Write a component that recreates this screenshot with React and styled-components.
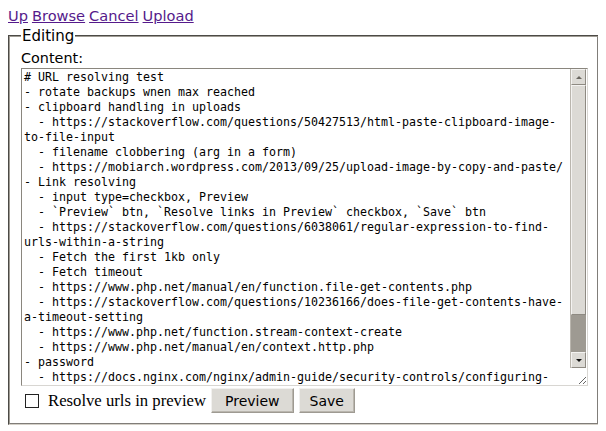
import React from 'react'
import styled, { createGlobalStyle } from 'styled-components'

const Global = createGlobalStyle`
  body {
    margin: 8px;
    font-family: "DejaVu Sans", sans-serif;
    font-size: 14px;
    background: #fff;
    color: #000;
  }
`

const Nav = styled.nav`
  line-height: 16px;
  font-size: 14.6px;
  margin-bottom: 4px;

  a {
    color: #551a8b;
    text-decoration: underline;
    margin-right: 4px;
  }
`

const Fieldset = styled.fieldset`
  margin: 0;
  padding: 0 9px 10px 11px;
  border: 2px groove #d4d0c8;
  border-top-color: #a09c94;
  border-left-color: #a09c94;
`

const Legend = styled.legend`
  padding: 0 1px;
  line-height: 16px;
  font-size: 15px;
`

const Label = styled.div`
  line-height: 16px;
  font-size: 14.4px;
  margin: 6px 0 2px;
`

const Editor = styled.div`
  position: relative;
  width: 567px;
`

const Area = styled.textarea`
  display: block;
  box-sizing: border-box;
  width: 567px;
  height: 318px;
  margin: 0;
  padding: 1px 21px 1px 2px;
  border: 1px solid #8a867e;
  border-right-color: #d8d6d2;
  border-bottom-color: #d8d6d2;
  font-family: "DejaVu Sans Mono", monospace;
  font-size: 11.63px;
  line-height: 15px;
  color: #000;
  background: #fff;
  resize: both;
  outline: none;
  overflow-y: scroll;
`

const ScrollBar = styled.div`
  position: absolute;
  top: 1px;
  right: 2px;
  width: 16px;
  height: 299px;
  display: flex;
  flex-direction: column;
  background: #9e9a92;
  border-left: 1px solid #bab6ae;
  box-sizing: border-box;
`

const Raised = styled.div`
  box-sizing: border-box;
  background: #dcdad5;
  border: 1px solid #8e8a82;
  border-top-color: #f4f3f1;
  border-left-color: #f4f3f1;
  flex: 0 0 ${p => p.$size}px;
  display: flex;
  align-items: center;
  justify-content: center;
`

const Arrow = styled.span`
  width: 0;
  height: 0;
  border-left: 3px solid transparent;
  border-right: 3px solid transparent;
  ${p => (p.$down ? 'border-top: 3px solid #111;' : 'border-bottom: 3px solid #6a6760;')}
`

const Trough = styled.div`
  flex: 1;
`

const Actions = styled.div`
  display: flex;
  align-items: center;
  margin-top: 2px;
`

const Check = styled.input`
  appearance: none;
  width: 14px;
  height: 14px;
  margin: 0 9px 0 4px;
  border: 1px solid #222;
  background: #fff;
  box-sizing: border-box;
`

const CheckText = styled.label`
  font-family: "Liberation Serif", serif;
  font-size: 16.7px;
  margin-right: 5px;
`

const Button = styled.button`
  font-family: "DejaVu Sans", sans-serif;
  font-size: 14px;
  height: 25px;
  padding: 0 ${p => p.$pad || 13}px;
  margin-right: 5px;
  color: #000;
  background: #dcdad5;
  border: 1px solid #9e9a92;
  border-top-color: #f2f1ef;
  border-left-color: #f2f1ef;
  box-shadow: inset -1px -1px 0 #bab6ae;
`

const content = `# URL resolving test
- rotate backups wnen max reached
- clipboard handling in uploads
  - https://stackoverflow.com/questions/50427513/html-paste-clipboard-image-to-file-input
  - filename clobbering (arg in a form)
  - https://mobiarch.wordpress.com/2013/09/25/upload-image-by-copy-and-paste/
- Link resolving
  - input type=checkbox, Preview
  - \`Preview\` btn, \`Resolve links in Preview\` checkbox, \`Save\` btn
  - https://stackoverflow.com/questions/6038061/regular-expression-to-find-urls-within-a-string
  - Fetch the first 1kb only
  - Fetch timeout
  - https://www.php.net/manual/en/function.file-get-contents.php
  - https://stackoverflow.com/questions/10236166/does-file-get-contents-have-a-timeout-setting
  - https://www.php.net/function.stream-context-create
  - https://www.php.net/manual/en/context.http.php
- password
  - https://docs.nginx.com/nginx/admin-guide/security-controls/configuring-http-basic-authentication/
`

const App = () => (
  <>
    <Global />
    <Nav>
      <a href="#up">Up</a>
      <a href="#browse">Browse</a>
      <a href="#cancel">Cancel</a>
      <a href="#upload">Upload</a>
    </Nav>
    <form onSubmit={e => e.preventDefault()}>
      <Fieldset>
        <Legend>Editing</Legend>
        <Label>Content:</Label>
        <Editor>
          <Area defaultValue={content} spellCheck={false} />
          <ScrollBar aria-hidden="true">
            <Raised $size={16}><Arrow /></Raised>
            <Raised $size={230} />
            <Trough />
            <Raised $size={16}><Arrow $down /></Raised>
          </ScrollBar>
        </Editor>
        <Actions>
          <Check type="checkbox" id="resolve" />
          <CheckText htmlFor="resolve">Resolve urls in preview</CheckText>
          <Button type="button">Preview</Button>
          <Button type="submit" $pad={10}>Save</Button>
        </Actions>
      </Fieldset>
    </form>
  </>
)

export default App
